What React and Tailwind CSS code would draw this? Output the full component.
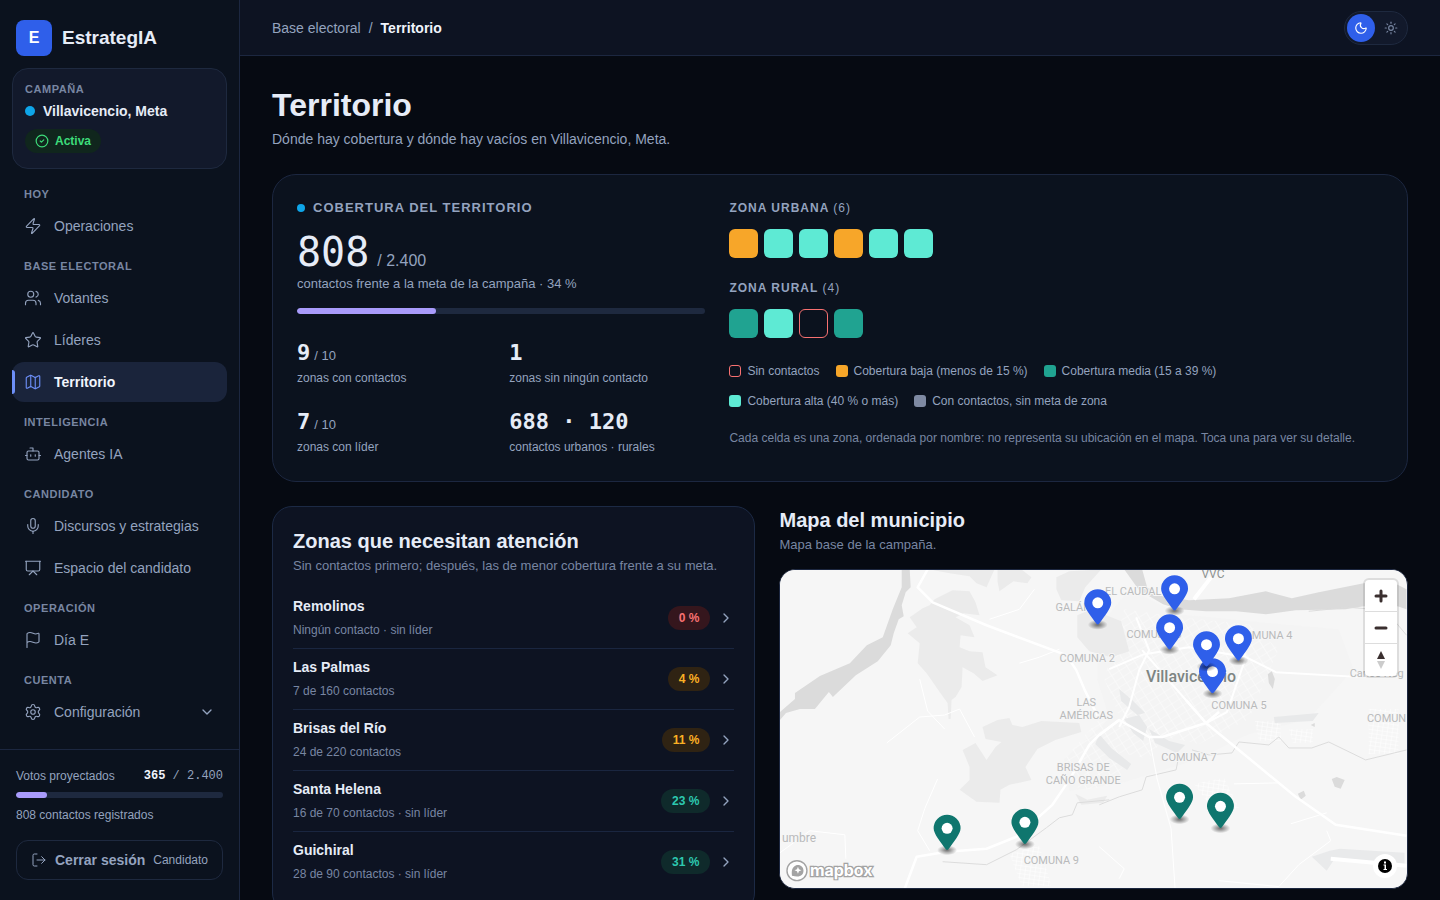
// App.jsx
import React, { useState } from 'react';
import {
  Bot, ChevronDown, ChevronRight, CircleCheck, Flag, LogOut, Map, Mic, Moon,
  Presentation, Settings, Star, Sun, Users, Zap,
} from 'lucide-react';

const NAV = [
  { title: 'Hoy', items: [{ label: 'Operaciones', icon: Zap }] },
  {
    title: 'Base electoral',
    items: [
      { label: 'Votantes', icon: Users },
      { label: 'Líderes', icon: Star },
      { label: 'Territorio', icon: Map, active: true },
    ],
  },
  { title: 'Inteligencia', items: [{ label: 'Agentes IA', icon: Bot }] },
  {
    title: 'Candidato',
    items: [
      { label: 'Discursos y estrategias', icon: Mic },
      { label: 'Espacio del candidato', icon: Presentation },
    ],
  },
  { title: 'Operación', items: [{ label: 'Día E', icon: Flag }] },
  { title: 'Cuenta', items: [{ label: 'Configuración', icon: Settings, more: true }] },
];

const CELL = {
  none: 'border border-[#f87171]',
  low: 'bg-[#f7a629]',
  mid: 'bg-[#20a391]',
  high: 'bg-[#5eead4]',
  nogoal: 'bg-[#7f8aa3]',
};

const URBAN = ['low', 'high', 'high', 'low', 'high', 'high'];
const RURAL = ['mid', 'high', 'none', 'mid'];

const LEGEND = [
  ['none', 'Sin contactos'],
  ['low', 'Cobertura baja (menos de 15 %)'],
  ['mid', 'Cobertura media (15 a 39 %)'],
  ['high', 'Cobertura alta (40 % o más)'],
  ['nogoal', 'Con contactos, sin meta de zona'],
];

const PILL = {
  red: 'bg-[#35161d] text-[#f87171]',
  amber: 'bg-[#2f2313] text-[#fbb024]',
  teal: 'bg-[#0f2a2b] text-[#2dc9b0]',
};

const ZONES = [
  { name: 'Remolinos', info: 'Ningún contacto · sin líder', pct: '0 %', tone: 'red' },
  { name: 'Las Palmas', info: '7 de 160 contactos', pct: '4 %', tone: 'amber' },
  { name: 'Brisas del Río', info: '24 de 220 contactos', pct: '11 %', tone: 'amber' },
  { name: 'Santa Helena', info: '16 de 70 contactos · sin líder', pct: '23 %', tone: 'teal' },
  { name: 'Guichiral', info: '28 de 90 contactos · sin líder', pct: '31 %', tone: 'teal' },
];

const PINS = [
  { x: 318, y: 33, color: '#2f5fea' },
  { x: 395, y: 19, color: '#2f5fea' },
  { x: 390, y: 58, color: '#2f5fea' },
  { x: 459, y: 69, color: '#2f5fea' },
  { x: 433, y: 102, color: '#2f5fea' },
  { x: 427, y: 75, color: '#2f5fea' },
  { x: 167, y: 259, color: '#0f766e' },
  { x: 245, y: 253, color: '#0f766e' },
  { x: 400, y: 228, color: '#0f766e' },
  { x: 441, y: 237, color: '#0f766e' },
];

const PLACES = [
  [354, 26, 'EL CAUDAL'],
  [294, 42, 'GALÁN'],
  [375, 69, 'COMUNA 3'],
  [486, 70, 'COMUNA 4'],
  [308, 93, 'COMUNA 2'],
  [460, 140, 'COMUNA 5'],
  [307, 137, 'LAS'],
  [307, 150, 'AMÉRICAS'],
  [304, 202, 'BRISAS DE'],
  [304, 215, 'CAÑO GRANDE'],
  [410, 192, 'COMUNA 7'],
  [272, 295, 'COMUNA 9'],
  [608, 153, 'COMUN'],
];

function Progress({ value, label }) {
  return (
    <div
      role="progressbar"
      aria-label={label}
      aria-valuenow={value}
      aria-valuemin={0}
      aria-valuemax={100}
      className="h-1.5 rounded-full bg-[#1e293f] overflow-hidden"
    >
      <div className="h-full rounded-full bg-[#a99bfb]" style={{ width: `${value}%` }} />
    </div>
  );
}

function Sidebar() {
  return (
    <aside className="w-60 shrink-0 flex flex-col bg-[#0b121e] border-r border-[#1c2740]">
      <div className="flex items-center gap-2.5 px-4 pt-5 pb-3">
        <div className="size-9 rounded-lg bg-[#2f5fea] text-white font-bold text-base flex items-center justify-center">E</div>
        <span className="text-[19px] leading-6 font-bold text-[#e6ecf7]">EstrategIA</span>
      </div>

      <div className="mx-3 h-[101px] rounded-2xl border border-[#1e293f] bg-[#12192b] px-3 pt-3">
        <p className="text-[11px] leading-4 font-bold tracking-wider text-[#7886a2]">CAMPAÑA</p>
        <p className="mt-1 flex items-center gap-2 text-sm leading-5 font-bold text-[#e6ecf7]">
          <span className="size-2.5 rounded-full bg-[#0ea5e9]" />
          Villavicencio, Meta
        </p>
        <span className="mt-2 inline-flex h-6 items-center gap-1.5 rounded-full bg-[#10261d] px-2.5 text-xs font-bold text-[#3ddc7a]">
          <CircleCheck size={14} />
          Activa
        </span>
      </div>

      <nav className="flex-1 flex flex-col gap-1 px-3 pt-[9px]" aria-label="Principal">
        {NAV.map(group => (
          <div key={group.title}>
            <p className="px-3 pt-2 pb-1 text-[11px] leading-4 font-bold tracking-wider uppercase text-[#7886a2]">{group.title}</p>
            <ul className="flex flex-col gap-0.5">
              {group.items.map(item => (
                <li key={item.label}>
                  <a
                    href="#"
                    aria-current={item.active ? 'page' : undefined}
                    className={
                      item.active
                        ? 'relative h-10 flex items-center gap-3 px-3 rounded-xl bg-[#1a243b] text-sm font-bold text-[#f1f5fd]'
                        : 'h-10 flex items-center gap-3 px-3 rounded-xl text-sm text-[#94a3bf]'
                    }
                  >
                    {item.active && <span className="absolute left-0 top-2 bottom-2 w-[3px] rounded-r-sm bg-[#6d8ff8]" />}
                    <item.icon size={18} strokeWidth={1.5} className={item.active ? 'text-[#6d8ff8]' : ''} />
                    {item.label}
                    {item.more && <ChevronDown size={16} className="ml-auto" />}
                  </a>
                </li>
              ))}
            </ul>
          </div>
        ))}
      </nav>

      <div className="border-t border-[#1c2740] px-4 pt-4 pb-5">
        <div className="flex justify-between text-xs leading-5 text-[#94a3bf]">
          <span>Votos proyectados</span>
          <span className="font-['Liberation_Mono',monospace]"><b className="text-[#f1f5fd]">365</b> / 2.400</span>
        </div>
        <div className="mt-1.5">
          <Progress value={15} label="Votos proyectados" />
        </div>
        <p className="mt-2 text-xs leading-[18px] text-[#94a3bf]">808 contactos registrados</p>
        <button className="mt-4 h-10 w-full flex items-center justify-center gap-2 rounded-xl border border-[#1e293f] text-sm font-bold text-[#94a3bf]">
          <LogOut size={16} strokeWidth={1.5} />
          Cerrar sesión
          <span className="text-xs font-normal">Candidato</span>
        </button>
      </div>
    </aside>
  );
}

function Header() {
  const [dark, setDark] = useState(true);
  return (
    <header className="h-14 shrink-0 flex items-center justify-between px-8 bg-[#0d1322] border-b border-[#1c2740]">
      <nav aria-label="Ruta" className="flex gap-2 text-sm">
        <a href="#" className="text-[#94a3bf]">Base electoral</a>
        <span className="text-[#94a3bf]">/</span>
        <span className="font-bold text-[#f1f5fd]">Territorio</span>
      </nav>
      <div className="flex gap-0.5 p-0.5 rounded-full border border-[#1e293f] bg-[#12192b]">
        <button
          aria-label="Tema oscuro"
          aria-pressed={dark}
          onClick={() => setDark(true)}
          className="size-7 flex items-center justify-center rounded-full bg-[#2f5fea] text-white"
        >
          <Moon size={14} />
        </button>
        <button
          aria-label="Tema claro"
          aria-pressed={!dark}
          onClick={() => setDark(false)}
          className="size-7 flex items-center justify-center rounded-full text-[#7886a2]"
        >
          <Sun size={14} />
        </button>
      </div>
    </header>
  );
}

function Stat({ value, total, label }) {
  return (
    <div>
      <p className="h-[30px] flex items-baseline gap-1 leading-[30px] text-[#94a3bf]">
        <span className="font-['DejaVu_Sans_Mono',monospace] text-[22px] font-bold text-[#e6ecf7] whitespace-nowrap">{value}</span>
        {total && <span className="text-[13px]">/ {total}</span>}
      </p>
      <p className="text-xs leading-5 text-[#94a3bf]">{label}</p>
    </div>
  );
}

function ZoneCells({ title, cells }) {
  return (
    <div>
      <h3 className="text-xs leading-5 font-bold tracking-[1px] text-[#94a3bf]">
        {title} <span className="font-normal">({cells.length})</span>
      </h3>
      <div className="mt-[11px] flex gap-1.5">
        {cells.map((c, i) => (
          <button key={i} aria-label={`Zona ${i + 1}`} className={`size-[29px] rounded-md ${CELL[c]}`} />
        ))}
      </div>
    </div>
  );
}

function Coverage() {
  return (
    <section className="mt-[25px] grid grid-cols-[5fr_8fr] gap-6 rounded-3xl border border-[#1c2740] bg-[#0b121e] px-6 pt-[23px] pb-6">
      <div>
        <h2 className="flex items-center gap-2 text-[13px] leading-5 font-bold tracking-[1px] text-[#94a3bf]">
          <span className="size-2 rounded-full bg-[#0ea5e9]" />
          COBERTURA DEL TERRITORIO
        </h2>
        <p className="mt-3 h-11 flex items-baseline gap-2 leading-11">
          <span className="font-['DejaVu_Sans_Mono',monospace] text-[40px] text-[#e6ecf7]">808</span>
          <span className="text-base text-[#94a3bf]">/ 2.400</span>
        </p>
        <p className="text-[13px] leading-5 text-[#94a3bf]">contactos frente a la meta de la campaña · 34 %</p>
        <div className="mt-3.5">
          <Progress value={34} label="Cobertura" />
        </div>
        <div className="mt-6 grid grid-cols-2 gap-x-4 gap-y-[19px]">
          <Stat value="9" total="10" label="zonas con contactos" />
          <Stat value="1" label="zonas sin ningún contacto" />
          <Stat value="7" total="10" label="zonas con líder" />
          <Stat value="688 · 120" label="contactos urbanos · rurales" />
        </div>
      </div>

      <div>
        <ZoneCells title="ZONA URBANA" cells={URBAN} />
        <div className="mt-5">
          <ZoneCells title="ZONA RURAL" cells={RURAL} />
        </div>
        <ul className="mt-[23px] flex flex-wrap gap-x-4 gap-y-2.5 max-w-[560px] text-xs leading-5 text-[#94a3bf]">
          {LEGEND.map(([kind, text]) => (
            <li key={kind} className="flex items-center gap-1.5">
              <span className={`size-3 rounded-[3px] ${CELL[kind]}`} />
              {text}
            </li>
          ))}
        </ul>
        <p className="mt-[17px] text-xs leading-5 text-[#7886a2]">
          Cada celda es una zona, ordenada por nombre: no representa su ubicación en el mapa. Toca una para ver su detalle.
        </p>
      </div>
    </section>
  );
}

function Attention() {
  return (
    <section className="rounded-[20px] border border-[#1c2a45] bg-[#0d1322] px-5 pt-5 pb-5">
      <h2 className="text-xl leading-7 font-bold text-[#e6ecf7]">Zonas que necesitan atención</h2>
      <p className="mt-px text-[13px] leading-5 text-[#7886a2]">Sin contactos primero; después, las de menor cobertura frente a su meta.</p>
      <ul className="mt-3 divide-y divide-[#1a2640]">
        {ZONES.map(z => (
          <li key={z.name}>
            <a href="#" className="flex h-[60px] items-center gap-2">
              <div className="flex-1">
                <p className="text-sm leading-5 font-bold text-[#e6ecf7]">{z.name}</p>
                <p className="mt-1 text-xs leading-5 text-[#7886a2]">{z.info}</p>
              </div>
              <span className={`h-6 flex items-center px-[11px] rounded-full text-xs font-bold ${PILL[z.tone]}`}>{z.pct}</span>
              <ChevronRight size={16} className="text-[#94a3bf]" />
            </a>
          </li>
        ))}
      </ul>
    </section>
  );
}

function Pin({ x, y, color }) {
  return (
    <g transform={`translate(${x - 13} ${y - 13})`}>
      <ellipse cx="13.5" cy="35.5" rx="10" ry="5" fill="url(#pinShadow)" />
      <path
        fill={color}
        d="M27 13.5C27 19.1 20.3 27 14.8 34.5c-.8 1-1.8 1-2.6 0C6.7 27 0 19.2 0 13.5a13.5 13.5 0 0 1 27 0Z"
      />
      <circle cx="13.5" cy="13.5" r="5.5" fill="#fff" />
    </g>
  );
}

function BaseMap() {
  return (
    <svg viewBox="0 0 628 320" preserveAspectRatio="xMidYMid slice" className="block w-full h-full" role="img" aria-label="Mapa de Villavicencio">
      <defs>
        <radialGradient id="pinShadow">
          <stop offset="0.1" stopColor="#000" stopOpacity="0.5" />
          <stop offset="1" stopColor="#000" stopOpacity="0" />
        </radialGradient>
        <pattern id="streets" width="9" height="7" patternUnits="userSpaceOnUse" patternTransform="rotate(-32)">
          <path d="M0 0H9M0 0V7" stroke="#fbfbfb" strokeWidth="1.2" fill="none" />
        </pattern>
        <pattern id="blocks" width="5" height="4" patternUnits="userSpaceOnUse" patternTransform="rotate(8)">
          <path d="M0 0H5M0 0V4" stroke="#fff" strokeWidth="1" fill="none" />
        </pattern>
      </defs>
      <rect width="628" height="320" fill="#f6f6f6" />

      {/* urban area */}
      <path d="M318 60 350 20 400 45 470 52 560 60 575 100 530 150 470 165 420 190 340 215 290 222 285 190 330 150 318 110Z" fill="#f4f4f4" />
      <path d="M345 40 400 48 470 55 500 80 470 150 420 175 345 160 325 110Z" fill="url(#streets)" />
      <path d="M285 190 320 150 350 165 340 215 300 222ZM325 180 345 140 390 160 370 190Z" fill="url(#streets)" />
      <path d="M476 152h26v20h-22ZM510 160h24v14h-20ZM590 140h30v45h-30ZM230 285l30-8 12 40h-30ZM415 215l30-6 15 30-20 10Z" fill="url(#blocks)" />

      {/* parks */}
      <g fill="#ebebeb">
        <path d="M133 46 143 39 150 36 155 30 173 21 190 22 196 33 200 46 184 44 176 48 190 56 195 68 181 66 180 78 190 82 203 83 206 98 218 106 203 112 194 104 183 98 182 118 176 128 172 131 171 150H169L168 134 160 123 147 104 138 94 140 74 128 64 137 58 130 48Z" />
        <path d="M150 0H215L207 18 197 14 190 7 170 4ZM218 0h24l10 8-4 6-14-2-14 10-2-10Z" />
        <path d="M277 8 290 2 322 0 306 18 300 32 282 31 277 20ZM298 46l14-6 30 12 8 30-18 6-22-6-12-14Z" />
        <path d="M203 158 218 151 230 149 233 156 243 158 262 152 300 154 302 163 276 171 258 180 246 198 252 211 230 216 221 221 220 234 197 233 180 221 190 211 190 198 183 181 196 174 207 191 216 178 222 173 206 170Z" />
        <path d="M296 225l12 6 20-4-4 7-22 2Z" />
        <path d="M345 150l15-4 8 12-4 14-10-8ZM370 160l20 12 16 4-8 8-22-10ZM495 148l45-4-6 8-38 2ZM340 120l14 12 12 12-8 2-16-14ZM320 165l12 14 20 16-4 6-18-12-14-14Z" fill="#e8e9ea" />
        <path d="M533 288l18-6 10-2 65 4v12l-70-6-8 12Z" fill="#e9eaeb" />
      </g>

      {/* rivers */}
      <g fill="#dbdbdb">
        <path d="M122 0h8l1 18-5 5-4 13 2 11-5 3-5 14-3 12-13 16-22 14-23 22-4-5-14 17L20 140 6 144 0 151v-8l15-13v-6l25-17 30-13 17-18 16-8 10-28 9-22Z" />
        <path d="M345 0h18l5 18 15 9 27 4 40-2 37-7 26 7 27-6 45-9 25-3 12 6 6 3v20l-9-3-34 0-18 3-50 1-30 4-30-3h-30l-27-2-16-5-24-14Z" />
        <path d="M489 105l4-3 3 8-2 10-4-6ZM553 210l5-2 8 3-4 9-6-2ZM519 225l6-3 2 5-5 4ZM532 156l4-2v4Z" />
      </g>
      <g fill="none" stroke="#dcdcdc" strokeWidth="1">
        <path d="M320 236 340 228 363 221 367 208 397 201 399 191M413 181 430 186 453 184 460 173 490 176 500 168 510 179 533 179 550 173 587 191 628 181" />
        <path d="M163 293 207 296 237 281 267 259 280 249 293 246 298 234 330 231M530 42l40-4 24 2 24 14 10 12" />
      </g>

      {/* roads */}
      <g fill="none" stroke="#fff" strokeLinejoin="round">
        <path strokeWidth="2.5" d="M148 0 138 18 153 33 207 56 287 86 297 101 305 120 320 150" />
        <path strokeWidth="2.5" d="M340 151 320 166 310 176 290 211 273 236 237 268 207 280 167 283 137 288 125 320" />
        <path strokeWidth="2.5" d="M407 131 427 154 517 228 557 256 628 267M320 166 340 151 370 168 383 168 427 154 440 143" />
        <path strokeWidth="2" d="M357 48 370 81 360 101 350 138 340 158M363 81 427 154M467 88 497 103 583 108M455 58 467 88 448 143 427 154M330 100 365 85 410 78 467 88" />
        <path strokeWidth="4" d="M552 290 628 297M415 30 432 8" />
        <path strokeWidth="1" d="M370 168 378 210 392 260 396 320M107 174 140 148 165 146 180 140 195 168M140 110 148 142 165 160M158 210 145 240 138 262 150 282M0 284 30 262 65 266 66 290M548 262 552 272 520 296 500 318 440 312M320 278 345 300 340 310M455 215 500 214M512 255 548 244M255 20 240 40 210 50M240 94 260 88 280 80" />
      </g>

      <g fill="#b9babb" fontFamily="Roboto, sans-serif" fontSize="11" textAnchor="middle" stroke="#f6f6f6" strokeWidth="2" paintOrder="stroke">
        {PLACES.map(([x, y, name]) => (
          <text key={name} x={x} y={y}>{name}</text>
        ))}
        <text x="598" y="108">Carlos Neg</text>
        <text x="19" y="273" fontSize="12">umbre</text>
      </g>
      <text x="434" y="9" fontFamily="Roboto, sans-serif" fontSize="12" textAnchor="middle" fill="#8d9291">VVC</text>
      <text x="412" y="113" fontFamily="Roboto, sans-serif" fontSize="16" fontWeight="500" textAnchor="middle" fill="#7d8583" stroke="#f6f6f6" strokeWidth="2" paintOrder="stroke">Villavicencio</text>

      {PINS.map(p => (
        <Pin key={`${p.x}-${p.y}`} {...p} />
      ))}

      {/* attribution */}
      <g fill="#fff" stroke="#a3a3a3">
        <circle cx="17" cy="302" r="10" strokeWidth="1.4" />
        <path d="M12 307c-.5-5 0-7 2-9 2.200-2.200 6-2 8 0s2.200 6 0 8c-2 2-5 2.200-10 1Z" fill="#a3a3a3" stroke="none" />
        <path d="m18 298 1 2.500 2.500 1-2.500 1-1 2.500-1-2.500-2.500-1 2.500-1Z" stroke="none" />
        <text x="30" y="307" fontFamily="Inter, sans-serif" fontWeight="700" fontSize="16" strokeWidth="2.500" paintOrder="stroke">mapbox</text>
      </g>
    </svg>
  );
}

function MapPanel() {
  return (
    <section>
      <h2 className="text-xl leading-7 font-bold text-[#e6ecf7]">Mapa del municipio</h2>
      <p className="mt-px text-[13px] leading-5 text-[#7886a2]">Mapa base de la campaña.</p>
      <div className="relative mt-3.5 h-80 rounded-2xl border border-[#1c2740] bg-[#f6f6f6] overflow-hidden">
        <BaseMap />
        <div className="absolute top-2.5 right-2.5 w-8 rounded bg-white divide-y divide-[#ddd] ring-2 ring-black/10 text-[#333]">
          <button aria-label="Acercar" className="h-8 w-full flex items-center justify-center">
            <svg width="14" height="14" viewBox="0 0 14 14" stroke="#3a2f2f" strokeWidth="3" strokeLinecap="round"><path d="M7 2v10M2 7h10" /></svg>
          </button>
          <button aria-label="Alejar" className="h-8 w-full flex items-center justify-center">
            <svg width="14" height="14" viewBox="0 0 14 14" stroke="#3a2f2f" strokeWidth="3" strokeLinecap="round"><path d="M2 7h10" /></svg>
          </button>
          <button aria-label="Orientar al norte" className="h-8 w-full flex items-center justify-center">
            <svg width="10" height="20" viewBox="0 0 10 20"><path d="M1 9h8L5 1Z" fill="#3a2f2f" /><path d="M1 11h8l-4 8Z" fill="#ccc" /></svg>
          </button>
        </div>
        <button aria-label="Información" className="absolute bottom-2.5 right-2.5 size-6 flex items-center justify-center rounded-full bg-white">
          <svg width="14" height="14" viewBox="0 0 14 14">
            <circle cx="7" cy="7" r="7" />
            <path d="M5.500 5.500H8v4.500h1v1H5.500v-1h1V6.500h-1ZM6 2.500h2v2H6Z" fill="#fff" />
          </svg>
        </button>
      </div>
    </section>
  );
}

export default function App() {
  return (
    <div className="h-screen flex overflow-hidden bg-[#060a12] font-['Liberation_Sans',Arial,sans-serif]">
      <Sidebar />
      <div className="flex-1 min-w-0 flex flex-col">
        <Header />
        <main className="flex-1 overflow-hidden px-8 pt-[27px]">
          <h1 className="text-[32px] leading-11 font-bold text-[#e6ecf7]">Territorio</h1>
          <p className="mt-0.5 text-sm leading-5 text-[#94a3bf]">Dónde hay cobertura y dónde hay vacíos en Villavicencio, Meta.</p>
          <Coverage />
          <div className="mt-6 grid grid-cols-[10fr_13fr] gap-6">
            <Attention />
            <MapPanel />
          </div>
        </main>
      </div>
    </div>
  );
}
